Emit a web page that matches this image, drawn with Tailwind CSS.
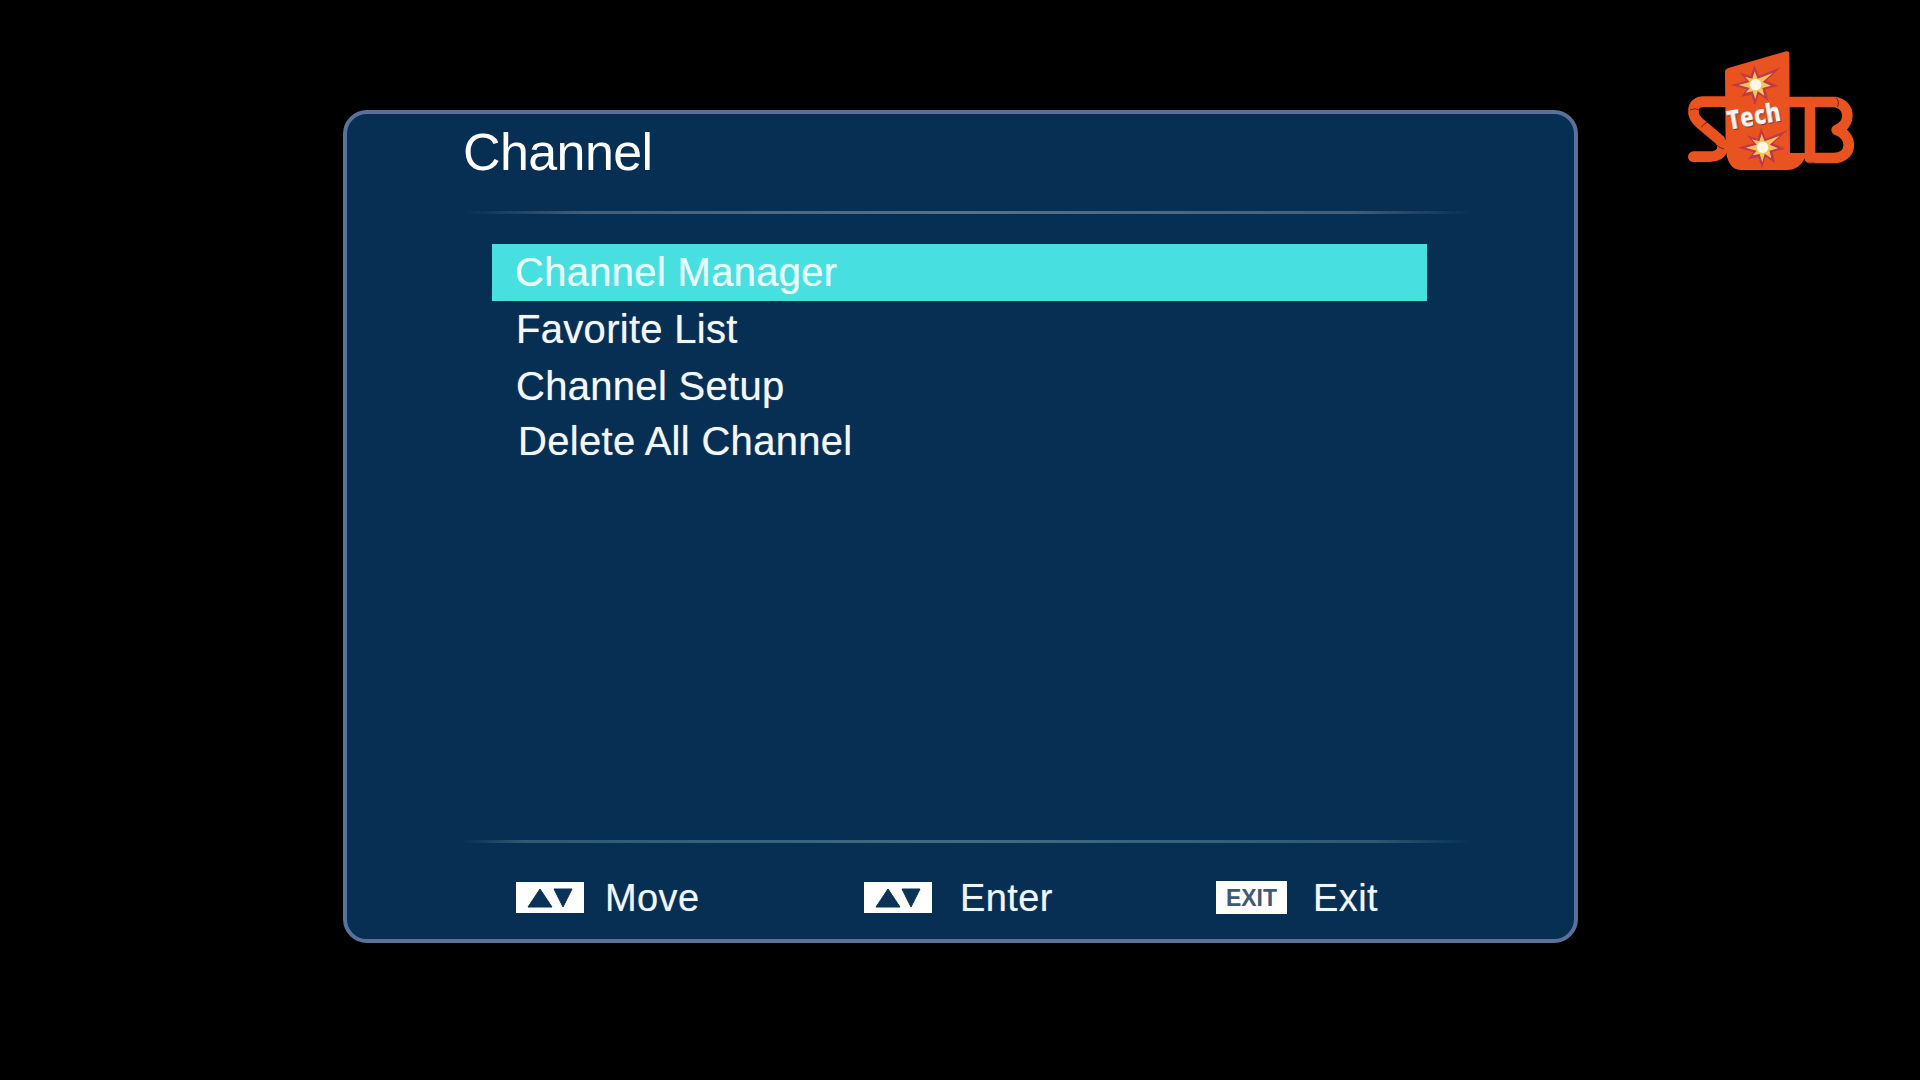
<!DOCTYPE html>
<html>
  <head>
    <script src="https://cdn.jsdelivr.net/npm/@tailwindcss/browser@4"></script>
    <title>Channel</title>
  </head>
  <body class="bg-black">
    <div class="relative w-[1920px] h-[1080px] overflow-hidden bg-black pt-[110px] pl-[343px] font-['Liberation_Sans',Arial,sans-serif] text-white">
      <!-- menu panel -->
      <div class="w-[1235px] h-[833px] rounded-[24px] border-4 border-[#5a7299] bg-[#062f53] flex flex-col pl-[116px]">
        <h1 class="h-[74px] pt-[8px] text-[52px] leading-[60px] tracking-[-0.6px] text-white">Channel</h1>
        <div class="mt-[23px] w-[1010px] h-[3px] bg-[linear-gradient(90deg,transparent,#3f5f7c_12%,#56728a_50%,#3f5f7c_88%,transparent)]"></div>

        <ul class="mt-[30px] ml-[29px] w-[935px] text-[40px] tracking-[0.3px] [text-shadow:0_0_1px_rgba(255,255,255,0.6)]">
          <li class="h-[57px] leading-[57px] pl-[23px] bg-[#48dfe0] text-[#e6ffff]">Channel Manager</li>
          <li class="h-[57px] leading-[57px] pl-[24px] text-[#f2f7fa]">Favorite List</li>
          <li class="h-[56px] leading-[57px] pl-[24px] text-[#f2f7fa]">Channel Setup</li>
          <li class="h-[57px] leading-[55px] pl-[26px] text-[#f2f7fa]">Delete All Channel</li>
        </ul>

        <div class="mt-[369px] w-[1010px] h-[3px] bg-[linear-gradient(90deg,transparent,#2f5a70_6%,#3f6d80_50%,#2f5a70_90%,transparent)]"></div>

        <div class="mt-[38px] ml-[53px] flex items-center text-[38px] tracking-[0.4px] text-[#f0f6fa] [text-shadow:0_0_1px_rgba(255,255,255,0.5)]">
          <div class="w-[348px] flex items-center gap-[21px]">
            <svg class="w-[68px] h-[31px]" viewBox="0 0 68 31">
              <rect width="68" height="31" fill="#ffffff" />
              <path d="M12 25 L24 7 L36 25 Z M38 7 L56 7 L47 25 Z" fill="#0b3358" stroke="#0b3358" stroke-width="1" stroke-linejoin="round" />
            </svg>
            <span class="leading-[32px]">Move</span>
          </div>
          <div class="w-[352px] flex items-center gap-[28px]">
            <svg class="w-[68px] h-[31px]" viewBox="0 0 68 31">
              <rect width="68" height="31" fill="#ffffff" />
              <path d="M12 25 L24 7 L36 25 Z M38 7 L56 7 L47 25 Z" fill="#0b3358" stroke="#0b3358" stroke-width="1" stroke-linejoin="round" />
            </svg>
            <span class="leading-[32px]">Enter</span>
          </div>
          <div class="flex items-center gap-[26px]">
            <span class="w-[71px] h-[33px] pt-[2px] bg-white flex items-center justify-center text-[23px] font-bold leading-none tracking-normal text-[#3e5a78] [text-shadow:none]">EXIT</span>
            <span class="leading-[32px]">Exit</span>
          </div>
        </div>
      </div>

      <!-- channel logo, sits over the video corner -->
      <svg class="absolute left-[1660px] top-[30px] w-[210px] h-[160px]" viewBox="0 0 630 480">
        <g fill="none" stroke="#e9531f" stroke-width="32" stroke-linecap="round" stroke-linejoin="round">
          <path d="M205 215 H130 C95 215 90 255 120 280 L170 322 C200 345 190 380 150 380 H100" />
          <path d="M390 216 H525 C575 225 572 285 530 300 C580 315 580 384 520 384 H450" />
          <path d="M450 216 V384" />
        </g>
        <path d="M195 125 Q195 118 205 114 L378 64 Q388 62 388 72 L390 369 L440 369 Q425 420 380 420 L245 420 Q200 420 197 350 Z" fill="#e9531f" />
        <g fill="none" stroke="#3a1408" stroke-width="2">
          <path d="M90 240 Q105 232 118 240" />
          <path d="M124 292 Q130 282 142 276" />
          <path d="M170 345 Q180 355 192 357" />
          <path d="M528 203 Q540 215 532 231" />
          <path d="M436 399 H465" />
        </g>
        <g id="star-top">
          <polygon points="283,105 296,138 362,112 318,152 355,168 316,178 325,212 296,192 285,228 274,194 243,200 260,178 212,165 260,152 240,128 272,138" fill="#c2384a" />
          <polygon points="284,124 293,146 338,129 308,156 333,167 307,174 313,197 293,183 286,208 278,184 257,188 269,174 236,165 269,156 255,140 277,146" fill="#f7c65a" />
          <circle cx="287" cy="164" r="17" fill="#fff8e8" />
        </g>
        <g transform="translate(21 188)">
          <polygon points="283,105 296,138 362,112 318,152 355,168 316,178 325,212 296,192 285,228 274,194 243,200 260,178 212,165 260,152 240,128 272,138" fill="#c2384a" />
          <polygon points="284,124 293,146 338,129 308,156 333,167 307,174 313,197 293,183 286,208 278,184 257,188 269,174 236,165 269,156 255,140 277,146" fill="#f7c65a" />
          <circle cx="287" cy="164" r="17" fill="#fff8e8" />
        </g>
        <text x="206" y="300" transform="rotate(-10 206 300)" font-family="'Open Sans','Liberation Sans',sans-serif" font-weight="800" font-size="80" textLength="162" lengthAdjust="spacingAndGlyphs" fill="#f6f6f6" class="drop-shadow-[2px_3px_0_#8c2a12]">Tech</text>
      </svg>
    </div>
  </body>
</html>
